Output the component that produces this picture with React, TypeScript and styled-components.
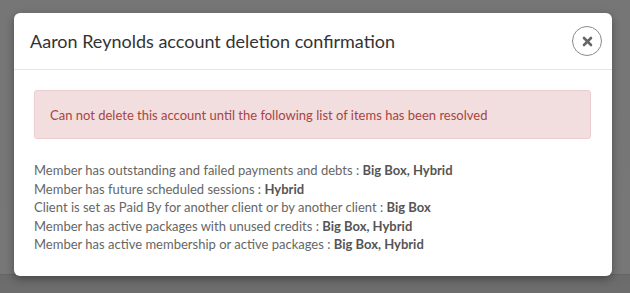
import React from 'react';
import styled, { createGlobalStyle } from 'styled-components';

const GlobalStyle = createGlobalStyle`
  body {
    margin: 0;
    background: linear-gradient(#767676 0, #777 274px, #5f5f5f 274px, #6b6b6b 275px, #6e6e6e 100%);
    min-height: 293px;
    font-family: "Lato", "Noto Sans", sans-serif;
  }
`;

const Overlay = styled.div`
  display: flex;
  align-items: flex-start;
  padding: 13px 18px 20px 14px;
`;

const Modal = styled.div`
  width: 598px;
  background: #fff;
  border-radius: 6px;
  box-shadow: 0 3px 9px rgba(0, 0, 0, 0.35);
`;

const Header = styled.div`
  display: flex;
  align-items: center;
  justify-content: space-between;
  height: 56px;
  padding: 0 10px 0 16px;
  border-bottom: 1px solid #e5e5e5;
`;

const Title = styled.h4`
  margin: 0;
  font-size: 18px;
  font-weight: 400;
  color: #333;
`;

const CloseButton = styled.button`
  display: flex;
  align-items: center;
  justify-content: center;
  width: 30px;
  height: 30px;
  padding: 0;
  border: 1px solid #8a8a8a;
  border-radius: 50%;
  background: #fff;
  color: #666;
  cursor: pointer;
`;

const Body = styled.div`
  padding: 20px 21px 22px 20px;
`;

const Alert = styled.div`
  display: flex;
  align-items: center;
  height: 47px;
  padding: 0 15px;
  background: #f2dede;
  border: 1px solid #ebccd1;
  border-radius: 3px;
  color: #a94442;
  font-size: 13px;
`;

const Issues = styled.ul`
  list-style: none;
  margin: 22px 0 0;
  padding: 0;
`;

const Issue = styled.li`
  font-size: 13px;
  line-height: 18.5px;
  color: #666;

  b {
    color: #555;
    font-weight: 700;
  }
`;

const issues = [
  { label: 'Member has outstanding and failed payments and debts', where: 'Big Box, Hybrid' },
  { label: 'Member has future scheduled sessions', where: 'Hybrid' },
  { label: 'Client is set as Paid By for another client or by another client', where: 'Big Box' },
  { label: 'Member has active packages with unused credits', where: 'Big Box, Hybrid' },
  { label: 'Member has active membership or active packages', where: 'Big Box, Hybrid' },
];

const App = () => {
  return (
    <>
      <GlobalStyle />
      <Overlay>
        <Modal>
          <Header>
            <Title>Aaron Reynolds account deletion confirmation</Title>
            <CloseButton aria-label="Close">
              <svg width="11" height="11" viewBox="0 0 11 11">
                <path d="M2 2 L9 9 M9 2 L2 9" stroke="currentColor" strokeWidth="2.6" strokeLinecap="round" />
              </svg>
            </CloseButton>
          </Header>
          <Body>
            <Alert>Can not delete this account until the following list of items has been resolved</Alert>
            <Issues>
              {issues.map((item) => (
                <Issue key={item.label}>
                  {item.label} : <b>{item.where}</b>
                </Issue>
              ))}
            </Issues>
          </Body>
        </Modal>
      </Overlay>
    </>
  );
};

export default App;
